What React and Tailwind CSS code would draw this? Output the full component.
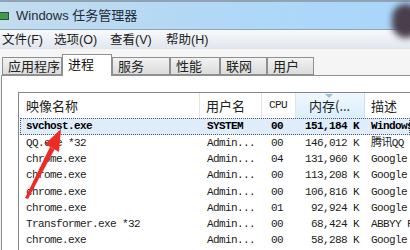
import React from 'react';

const rows = [
    ['svchost.exe', 'SYSTEM', '00', '151,184 K', 'Windows'],
    ['QQ.exe *32', 'Admin...', '00', '146,012 K', '腾讯QQ'],
    ['chrome.exe', 'Admin...', '04', '131,960 K', 'Google'],
    ['chrome.exe', 'Admin...', '00', '113,208 K', 'Google'],
    ['chrome.exe', 'Admin...', '00', '106,816 K', 'Google'],
    ['chrome.exe', 'Admin...', '01', '92,924 K', 'Google'],
    ['Transformer.exe *32', 'Admin...', '00', '68,424 K', 'ABBYY F'],
    ['chrome.exe', 'Admin...', '00', '58,288 K', 'Google'],
];

const tabs = [
    { label: '应用程序', w: 'w-[60px]' },
    { label: '进程', w: 'w-[50px]', active: true },
    { label: '服务', w: 'w-[58px]' },
    { label: '性能', w: 'w-[50px]' },
    { label: '联网', w: 'w-[47px]' },
    { label: '用户', w: 'w-[47px]' },
];

const menus = ['文件(F)', '选项(O)', '查看(V)', '帮助(H)'];

const sans = { fontFamily: '"Liberation Sans", "Noto Sans CJK SC", sans-serif' };

const Arrow = () => (
    <svg className="absolute left-0 top-0 pointer-events-none" width="410" height="250">
        <polygon points="61,129 59,152 45,144" fill="#ec2b24" />
        <polygon points="50,147 54.5,149.5 28,199 25,198" fill="#ec2b24" />
    </svg>
);

export default function App() {
    return (
        <div className="relative w-[410px] h-[250px] overflow-hidden bg-[#f2f2f2] flex flex-col" style={sans}>
            {/* title bar */}
            <div className="relative h-[30px] shrink-0 border-t-2 border-[#2c3742] bg-gradient-to-r from-[#c3dcee] via-[#b2d8f5] to-[#a8d6fb] flex items-center border-b border-[#8fa3b5]">
                <div className="w-[10px] h-[8px] bg-[#3d9b4a] border border-[#2f4f3a] ml-[-1px]"></div>
                <span className="ml-[7px] text-[13px] text-[#1e2b36] leading-none">Windows 任务管理器</span>
                <div className="absolute right-[-10px] top-[2px] w-[28px] h-[34px] rounded-full bg-[#4a3e4c] blur-[3px]"></div>
            </div>

            {/* menu bar */}
            <div className="h-[19px] shrink-0 bg-gradient-to-b from-[#f7f9fc] to-[#e1e6ee] flex items-center text-[12.5px] text-[#1b1b1b] leading-none pt-[2px]">
                {menus.map((m, i) => (
                    <span key={m} className={i === 0 ? 'ml-[2px] w-[52px]' : 'w-[56px]'}>{m}</span>
                ))}
            </div>

            {/* tabs */}
            <div className="h-[26px] shrink-0 flex items-end pl-[2px] bg-[#f5f5f5]">
                {tabs.map((t) => (
                    <div
                        key={t.label}
                        className={
                            t.active
                                ? `${t.w} h-[22px] bg-white border border-b-0 border-[#8e8f8f] flex items-start pl-[5px] pt-[3px] text-[13px] leading-none text-[#111] relative z-10 mb-[-1px]`
                                : `${t.w} h-[18px] bg-gradient-to-b from-[#f2f2f2] to-[#dcdcdc] border border-[#8e8f8f] flex items-center pl-[5px] text-[13px] leading-none text-[#222]`
                        }
                    >
                        {t.label}
                    </div>
                ))}
            </div>

            {/* panel */}
            <div className="flex-1 ml-[1px] bg-white border-l border-t border-[#8e8f8f] pl-[16px] pt-[16px]">
                <div className="border-l border-t border-[#828790] h-full">
                    {/* header */}
                    <div className="h-[25px] flex text-[13px] text-[#222] leading-none" style={{ fontFamily: '"Noto Sans CJK SC", sans-serif' }}>
                        <div className="w-[181px] flex items-center pl-[7px] border-r border-[#e3e3e3]">映像名称</div>
                        <div className="w-[62px] flex items-center pl-[6px] border-r border-[#e3e3e3]">用户名</div>
                        <div className="w-[34px] flex items-center pl-[7px] border-r border-[#e3e3e3] text-[11px] tracking-[-0.6px]" style={{ fontFamily: '"Liberation Mono", monospace' }}>CPU</div>
                        <div className="relative w-[69px] flex items-center pl-[13px] bg-gradient-to-b from-[#f0f8fd] to-[#d9eefb] border-r border-[#c8e2f3]">
                            内存(...
                            <svg className="absolute left-[29px] top-[1px]" width="8" height="5"><polygon points="0,0 8,0 4,4" fill="#9cbfd8" /></svg>
                        </div>
                        <div className="flex-1 flex items-center pl-[6px]">描述</div>
                    </div>

                    {/* rows */}
                    <div className="text-[11px] tracking-[-0.6px] text-[#1c1c1c] leading-none" style={{ fontFamily: '"Liberation Mono", "Noto Sans CJK SC", monospace' }}>
                        {rows.map((r, i) => (
                            <div
                                key={i}
                                className={
                                    i === 0
                                        ? 'h-[17px] flex items-center bg-[#dfecfa] border border-dotted border-[#4a5a6a] ml-[1px] font-bold text-black'
                                        : 'h-[16.3px] flex items-center ml-[2px]'
                                }
                            >
                                <div className="w-[180px] pl-[5px] shrink-0">{r[0]}</div>
                                <div className="w-[62px] pl-[6px] shrink-0">{r[1]}</div>
                                <div className="w-[34px] pl-[8px] shrink-0">{r[2]}</div>
                                <div className="w-[62px] text-right shrink-0">{r[3]}</div>
                                <div className="pl-[12px] whitespace-nowrap">{r[4]}</div>
                            </div>
                        ))}
                    </div>
                </div>
            </div>

            <Arrow />
        </div>
    );
}
